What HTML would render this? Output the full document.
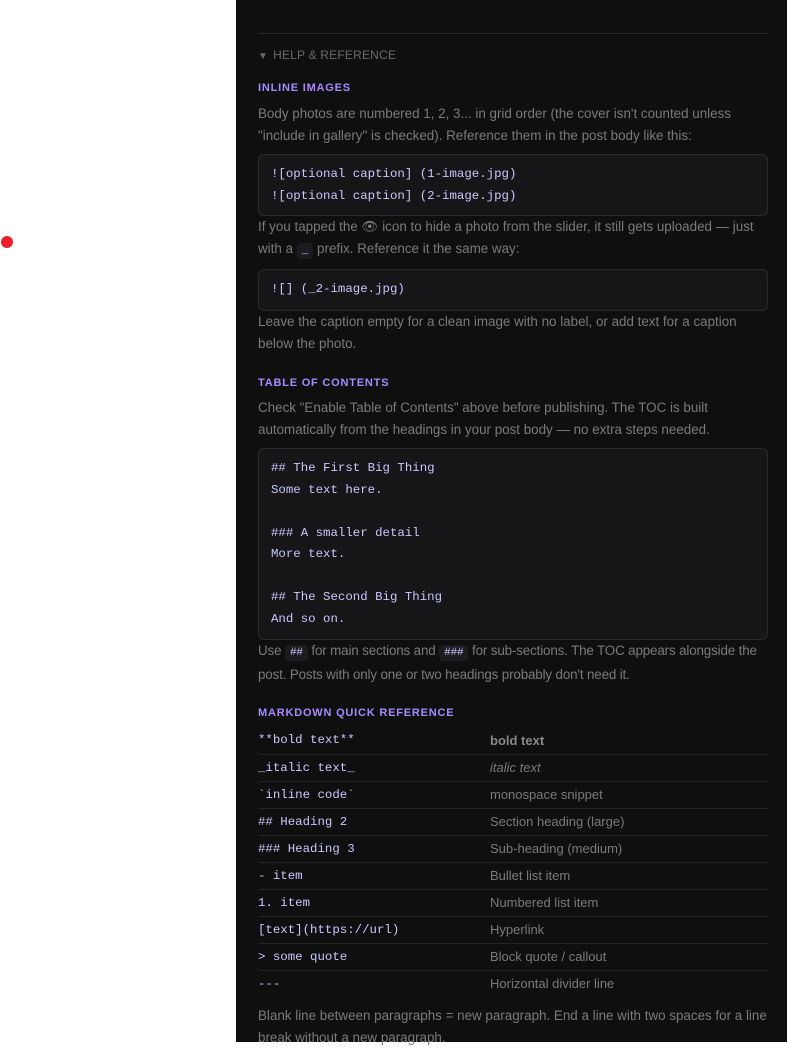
<!DOCTYPE html>
<html><head><meta charset="utf-8"><style>
*{margin:0;padding:0;box-sizing:border-box}
body{width:787px;height:1042px;overflow:hidden;background:#fff;position:relative;font-family:"Liberation Sans",sans-serif}
.dot{position:absolute;left:1px;top:236px;width:12px;height:12px;border-radius:50%;background:#e8202a}
.panel{position:absolute;left:236px;top:0;width:551px;height:1042px;background:#0f0f0f}
.a{position:absolute;left:22px;width:510px}
.hr{top:33px;height:1px;background:#262626}
.sum{top:47px;font-size:12px;color:#6a6a6a;letter-spacing:.2px;line-height:16px}
.sum b{font-size:10px;margin-right:5px}
.h{font-size:11px;font-weight:bold;color:#a48cff;letter-spacing:.8px;line-height:14px}
.p{font-size:13.4px;color:#7a7a7a;line-height:22px}
.code{background:#161618;border:1px solid #2a2a2c;border-radius:6px;padding:9px 12px;font-family:"Liberation Mono",monospace;font-size:12.4px;line-height:21.5px;color:#c8c8ff;white-space:pre}
.ic{font-family:"Liberation Mono",monospace;font-size:11px;background:#1c1c20;color:#c8c8ff;padding:2px 5px;border-radius:4px}
table{border-collapse:collapse;width:510px}
td{height:27px;border-bottom:1px solid #232323;font-size:13px;color:#7a7a7a;vertical-align:middle}
td:first-child{font-family:"Liberation Mono",monospace;font-size:12.4px;color:#c8c8ff;width:232px}
tr:last-child td{border-bottom:none}
</style></head><body>
<div class="dot"></div>
<div class="panel">
<div class="a hr"></div>
<div class="a sum"><b>▼</b>HELP &amp; REFERENCE</div>
<div class="a h" style="top:81px">INLINE IMAGES</div>
<div class="a p" style="top:103px">Body photos are numbered 1, 2, 3... in grid order (the cover isn't counted unless "include in gallery" is checked). Reference them in the post body like this:</div>
<div class="a code" style="top:154px;height:62px">![optional caption] (1-image.jpg)
![optional caption] (2-image.jpg)</div>
<div class="a p" style="top:216px">If you tapped the 👁 icon to hide a photo from the slider, it still gets uploaded — just with a <span class="ic">_</span> prefix. Reference it the same way:</div>
<div class="a code" style="top:269px;height:42px">![] (_2-image.jpg)</div>
<div class="a p" style="top:311px">Leave the caption empty for a clean image with no label, or add text for a caption below the photo.</div>
<div class="a h" style="top:376px">TABLE OF CONTENTS</div>
<div class="a p" style="top:397px">Check "Enable Table of Contents" above before publishing. The TOC is built automatically from the headings in your post body — no extra steps needed.</div>
<div class="a code" style="top:448px;height:192px">## The First Big Thing
Some text here.

### A smaller detail
More text.

## The Second Big Thing
And so on.</div>
<div class="a p" style="top:640px;letter-spacing:-.15px">Use <span class="ic">##</span> for main sections and <span class="ic">###</span> for sub-sections. The TOC appears alongside the post. Posts with only one or two headings probably don't need it.</div>
<div class="a h" style="top:706px">MARKDOWN QUICK REFERENCE</div>
<div class="a" style="top:727px"><table>
<tr><td>**bold text**</td><td style="font-weight:bold;color:#888">bold text</td></tr>
<tr><td>_italic text_</td><td style="font-style:italic">italic text</td></tr>
<tr><td>`inline code`</td><td>monospace snippet</td></tr>
<tr><td>## Heading 2</td><td>Section heading (large)</td></tr>
<tr><td>### Heading 3</td><td>Sub-heading (medium)</td></tr>
<tr><td>- item</td><td>Bullet list item</td></tr>
<tr><td>1. item</td><td>Numbered list item</td></tr>
<tr><td>[text](https://url)</td><td>Hyperlink</td></tr>
<tr><td>&gt; some quote</td><td>Block quote / callout</td></tr>
<tr><td>---</td><td>Horizontal divider line</td></tr>
</table></div>
<div class="a p" style="top:1005px">Blank line between paragraphs = new paragraph. End a line with two spaces for a line break without a new paragraph.</div>
</div>
</body></html>
